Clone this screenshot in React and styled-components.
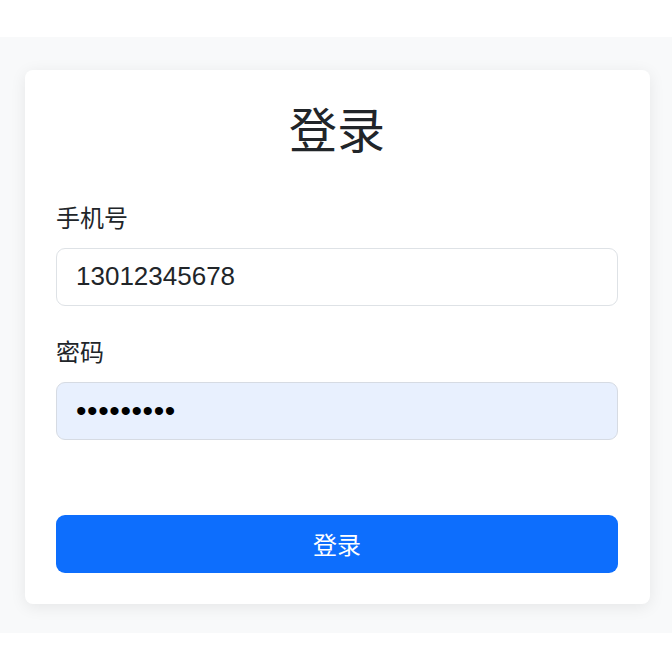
import React from "react";
import styled, { createGlobalStyle } from "styled-components";

const Global = createGlobalStyle`
  html, body { margin: 0; padding: 0; background: #ffffff; }
  body {
    font-family: "Noto Sans", "Noto Sans CJK SC", sans-serif;
    color: #212529;
  }
  * { box-sizing: border-box; }
`;

const Band = styled.div`
  margin-top: 37px;
  background: #f8f9fa;
  padding: 33px 22px 29px 25px;
`;

const Card = styled.form`
  background: #ffffff;
  border-radius: 8px;
  box-shadow: 0 3px 16px rgba(0, 0, 0, 0.08);
  padding: 31px 32px 31px 31px;
  display: flex;
  flex-direction: column;
`;

const Title = styled.h2`
  margin: 0 0 41px;
  font-size: 48px;
  font-weight: 400;
  line-height: 1.2;
  text-align: center;
  color: #212529;
`;

const Field = styled.div`
  display: flex;
  flex-direction: column;
  margin-bottom: ${(p) => p.$mb}px;
`;

const Label = styled.label`
  font-size: 24px;
  line-height: 36px;
  margin-bottom: 12px;
  color: #212529;
`;

const Input = styled.input`
  height: 58px;
  width: 100%;
  border: 1px solid ${(p) => (p.$filled ? "#d6dbe3" : "#dee2e6")};
  border-radius: 9px;
  background: ${(p) => (p.$filled ? "#e8f0fe" : "#ffffff")};
  padding: 0 19px;
  font-family: "Liberation Sans", "Noto Sans CJK SC", sans-serif;
  font-size: ${(p) => (p.$filled ? 30 : 26)}px;
  letter-spacing: ${(p) => (p.$filled ? 0.6 : 0)}px;
  color: ${(p) => (p.$filled ? "#000000" : "#212529")};
  outline: none;
`;

const Button = styled.button`
  height: 58px;
  width: 100%;
  border: none;
  border-radius: 9px;
  background: #0d6efd;
  color: #ffffff;
  font-family: "Noto Sans", "Noto Sans CJK SC", sans-serif;
  font-size: 24px;
  cursor: pointer;
`;

export default function App() {
  return (
    <>
      <Global />
      <Band>
        <Card onSubmit={(e) => e.preventDefault()}>
          <Title>登录</Title>
          <Field $mb={28}>
            <Label>手机号</Label>
            <Input type="text" defaultValue="13012345678" />
          </Field>
          <Field $mb={75}>
            <Label>密码</Label>
            <Input type="password" defaultValue="123456789" $filled />
          </Field>
          <Button type="submit">登录</Button>
        </Card>
      </Band>
    </>
  );
}
